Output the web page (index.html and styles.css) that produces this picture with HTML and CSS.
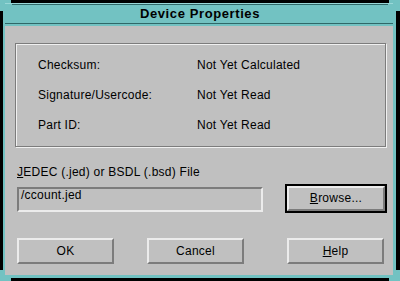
FILE: index.html
```html
<!DOCTYPE html>
<html lang="en">
<head>
    <meta charset="UTF-8">
    <title>Device Properties</title>
    <link rel="stylesheet" href="styles.css">
</head>
<body>

    <div class="screen">
        <div class="window">
            <!-- Title bar -->
            <div class="titlebar">
                <div class="title">Device Properties</div>
            </div>

            <div class="client">
                <!-- Device info -->
                <div class="group">
                    <div class="info">
                        <span>Checksum:</span><span>Not Yet Calculated</span>
                        <span>Signature/Usercode:</span><span>Not Yet Read</span>
                        <span>Part ID:</span><span>Not Yet Read</span>
                    </div>
                </div>

                <!-- File picker -->
                <p class="file-label"><u>J</u>EDEC (.jed) or BSDL (.bsd) File</p>
                <div class="file-row">
                    <div class="field">/ccount.jed</div>
                    <button class="btn default"><u>B</u>rowse...</button>
                </div>

                <!-- Dialog buttons -->
                <div class="actions">
                    <button class="btn">OK</button>
                    <button class="btn cancel">Cancel</button>
                    <button class="btn help"><u>H</u>elp</button>
                </div>
            </div>
        </div>

        <!-- Resize handles -->
        <div class="corner tl"></div>
        <div class="corner tr"></div>
        <div class="corner bl"></div>
        <div class="corner br"></div>
    </div>

</body>
</html>
```

FILE: styles.css
```css
/* General Styles */
body {
    margin: 0;
    padding: 0;
    background: #000;
    font-family: "Liberation Sans", Arial, sans-serif;
    font-size: 12px;
    letter-spacing: 0.25px;
    color: #000;
}

.screen {
    position: relative;
    width: 400px;
    height: 281px;
    overflow: hidden;
}

/* Window frame */
.window {
    margin: 3px 4px 3px 3px;
    padding: 0 3px 3px 2px;
    background: #72c2c2;
}

/* Title bar */
.titlebar {
    padding: 1px 0 2px;
    box-shadow: inset 0 1px 0 #9ad8d8;
}

.title {
    margin: 0 5px 0 7px;
    height: 18px;
    line-height: 18px;
    border-top: 1px solid #2f6868;
    text-align: center;
    font-size: 13px;
    font-weight: bold;
    letter-spacing: 0.6px;
}

.titlebar::after {
    content: "";
    display: block;
    height: 1px;
    background: #2f6868;
}

/* Dialog body */
.client {
    height: 249px;
    box-sizing: border-box;
    padding: 17px 0 0 12px;
    background: #c0c0c0;
}

/* Info group */
.group {
    width: 371px;
    margin-left: -2px;
    box-sizing: border-box;
    padding: 14px 0 13px 22px;
    border: 1px solid #7c7c7c;
    box-shadow: inset 1px 1px 0 #f0f0f0, 1px 1px 0 #f0f0f0;
}

.info {
    display: grid;
    grid-template-columns: 159px 1fr;
    row-gap: 15px;
    line-height: 15px;
}

/* File picker */
.file-label {
    margin: 18px 0 0;
    line-height: 15px;
}

.file-row {
    display: flex;
    align-items: flex-start;
    margin-top: 7px;
}

.field {
    width: 246px;
    height: 25px;
    box-sizing: border-box;
    padding: 0 2px;
    line-height: 13px;
    border: 2px solid;
    border-color: #7c7c7c #ececec #ececec #7c7c7c;
}

/* Buttons */
.btn {
    width: 97px;
    height: 26px;
    box-sizing: border-box;
    padding: 0;
    border: 2px solid;
    border-color: #ececec #7c7c7c #7c7c7c #ececec;
    background: #c0c0c0;
    font-family: inherit;
    font-size: 12px;
    letter-spacing: 0.25px;
    line-height: 22px;
    color: #000;
}

.default {
    width: 98px;
    height: 25px;
    margin: -1px 0 0 24px;
    line-height: 21px;
    box-shadow: 0 0 0 2px #000;
}

.actions {
    display: flex;
    margin-top: 26px;
}

.cancel {
    margin-left: 33px;
}

.help {
    margin-left: 43px;
}

/* Resize handle corners */
.corner {
    position: absolute;
    width: 11px;
    height: 11px;
    box-sizing: border-box;
    border: 0 solid #72c2c2;
}

.tl {
    left: 0;
    top: 0;
    border-top-width: 3px;
    border-left-width: 3px;
}

.tr {
    right: 0;
    top: 0;
    border-top-width: 3px;
    border-right-width: 4px;
}

.bl {
    left: 0;
    bottom: 0;
    border-bottom-width: 3px;
    border-left-width: 3px;
}

.br {
    right: 0;
    bottom: 0;
    border-bottom-width: 3px;
    border-right-width: 4px;
}
```
